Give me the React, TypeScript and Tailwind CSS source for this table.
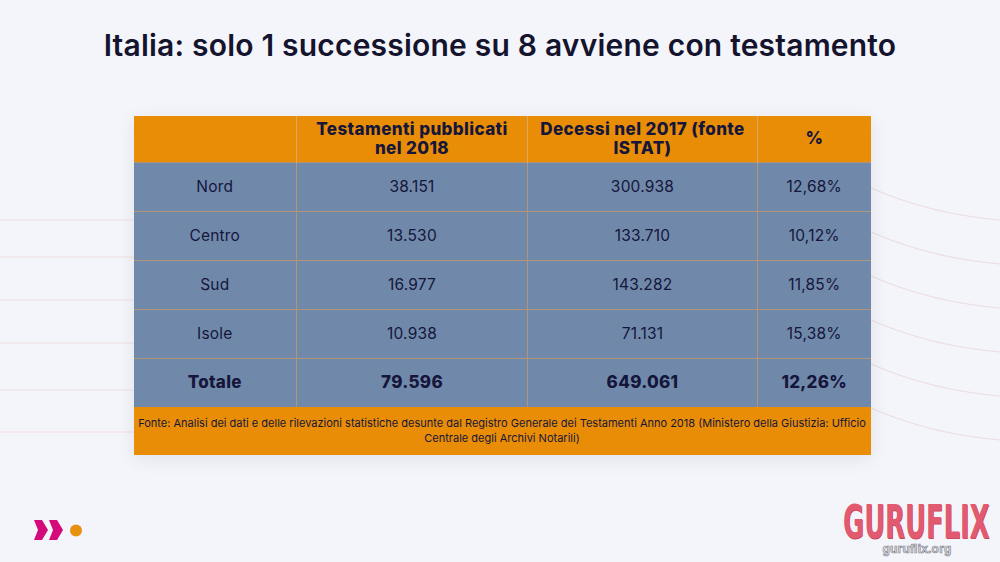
import React from "react";

const rows = [
  ["Nord", "38.151", "300.938", "12,68%"],
  ["Centro", "13.530", "133.710", "10,12%"],
  ["Sud", "16.977", "143.282", "11,85%"],
  ["Isole", "10.938", "71.131", "15,38%"],
];

function Bg() {
  return (
    <svg className="absolute inset-0" width="1000" height="562" viewBox="0 0 1000 562" fill="none">
      {[220, 257, 300, 343, 390, 432].map((y) => (
        <line key={y} x1="0" y1={y} x2="134" y2={y} stroke="#f0dde3" strokeWidth="1.2" />
      ))}
      {[0, 1, 2, 3, 4, 5].map((i) => {
        const y = 188 + i * 44;
        return (
          <path key={i} d={`M871 ${y} Q930 ${y + 26} 1000 ${y + 32}`} stroke="#ecdde3" strokeWidth="1.2" />
        );
      })}
    </svg>
  );
}

export default function App() {
  const font = { fontFamily: "Inter, 'Noto Sans', sans-serif" };
  return (
    <div className="relative w-[1000px] h-[562px] bg-[#f4f5fa] overflow-hidden text-[#15163a]" style={font}>
      <Bg />
      <div className="relative flex flex-col items-center">
        <h1 className="mt-[27px] text-[30px] leading-[36px] font-semibold tracking-[0.2px] text-[#15142e]">
          Italia: solo 1 successione su 8 avviene con testamento
        </h1>
        <div className="mt-[53px] ml-[4px] w-[737px] shadow-[0_4px_18px_rgba(0,0,0,0.08)]">
          <table className="w-full border-collapse table-fixed">
            <colgroup>
              <col className="w-[163px]" />
              <col className="w-[231px]" />
              <col className="w-[230px]" />
              <col className="w-[113px]" />
            </colgroup>
            <thead>
              <tr className="h-[46px] bg-[#e98d06]">
                <th className="border-r border-[#d8a668]"></th>
                <th className="border-r border-[#d8a668] text-[17px] leading-[19px] font-extrabold tracking-[0.4px] px-0">Testamenti pubblicati<br />nel 2018</th>
                <th className="border-r border-[#d8a668] text-[17px] leading-[19px] font-extrabold tracking-[0.4px] px-0">Decessi nel 2017 (fonte<br />ISTAT)</th>
                <th className="text-[17px] font-extrabold">%</th>
              </tr>
            </thead>
            <tbody className="bg-[#7089ab]">
              {rows.map((r) => (
                <tr key={r[0]} className="h-[49px]">
                  {r.map((c, i) => (
                    <td key={i} className={`text-center text-[15.5px] tracking-[0.2px] border-t border-[#b0957a] ${i < 3 ? "border-r" : ""}`}>{c}</td>
                  ))}
                </tr>
              ))}
              <tr className="h-[49px]">
                {["Totale", "79.596", "649.061", "12,26%"].map((c, i) => (
                  <td key={i} className={`text-center text-[17px] font-extrabold tracking-[0.3px] border-t border-[#b0957a] ${i < 3 ? "border-r" : ""}`}>{c}</td>
                ))}
              </tr>
              <tr className="h-[48px] bg-[#e98d06]">
                <td colSpan={4} className="text-center text-[11px] leading-[15px] px-0">
                  Fonte: Analisi dei dati e delle rilevazioni statistiche desunte dal Registro Generale dei Testamenti Anno 2018 (Ministero della Giustizia: Ufficio
                  <br />Centrale degli Archivi Notarili)
                </td>
              </tr>
            </tbody>
          </table>
        </div>
      </div>
      <svg className="absolute left-[33px] top-[519px]" width="54" height="24" viewBox="0 0 54 24">
        <path d="M1 1 L9 1 L15 11 L9 21 L1 21 L5 11 Z" fill="#d4097a" />
        <path d="M16 1 L24 1 L30 11 L24 21 L16 21 L20 11 Z" fill="#d4097a" />
        <circle cx="43" cy="11.5" r="6" fill="#e8900f" />
      </svg>
      <div className="absolute left-[843px] top-[502px] w-[148px] flex flex-col items-center">
        <div className="w-[148px] h-[40px] overflow-visible">
          <div
            className="whitespace-nowrap text-[47px] leading-[40px] font-bold text-[#e25a70] origin-left"
            style={{ fontFamily: "'DejaVu Sans Condensed', 'DejaVu Sans', sans-serif", transform: "scaleX(0.61)", textShadow: "1px 1px 0 #c9485d" }}
          >
            GURUFLIX
          </div>
        </div>
        <div className="mt-[1px] text-[12px] leading-[13px] font-bold text-[#ececf0] tracking-[0.2px]" style={{ fontFamily: "'Liberation Sans', Arial, sans-serif", WebkitTextStroke: "0.7px #85858f" }}>
          guruflix.org
        </div>
      </div>
    </div>
  );
}
